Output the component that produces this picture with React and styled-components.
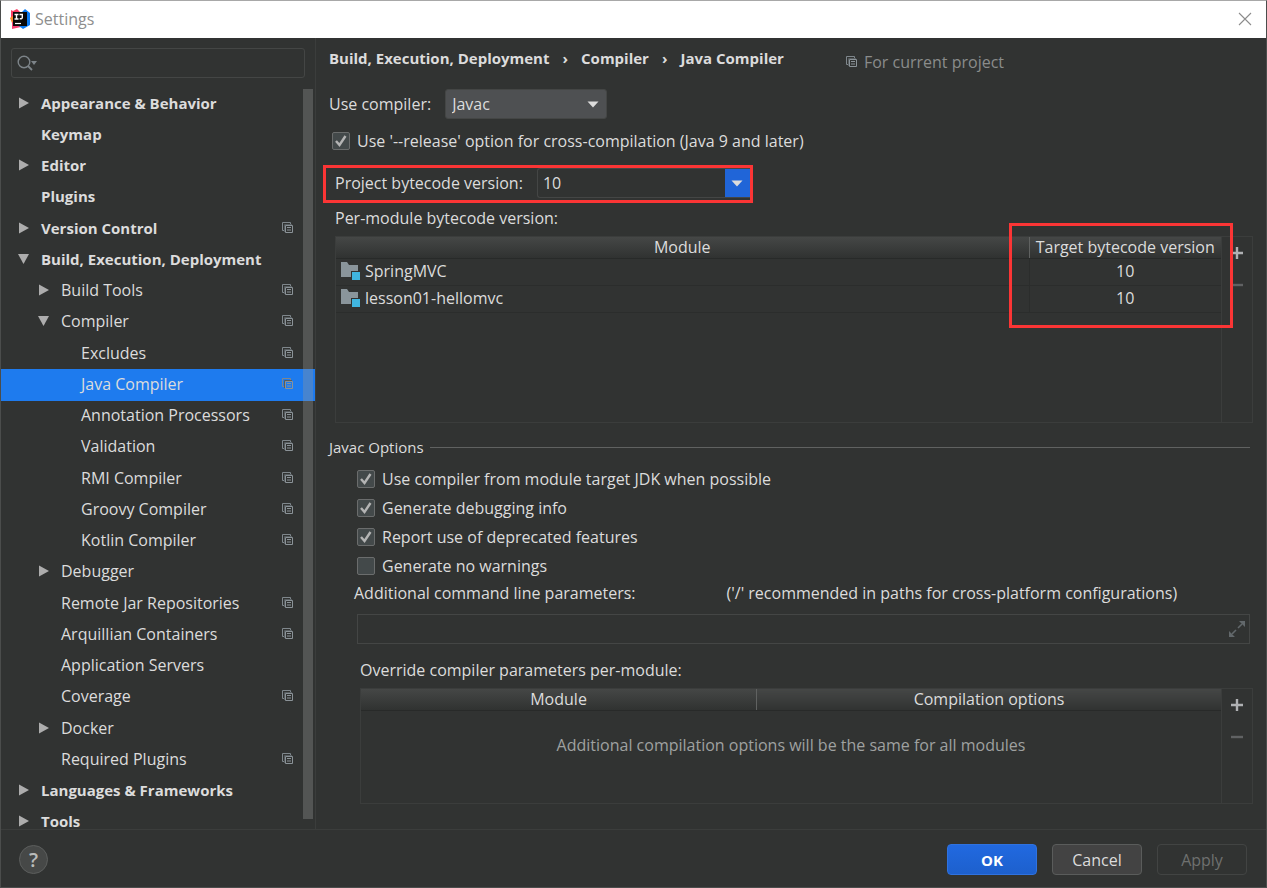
import { useState } from "react";
import styled, { createGlobalStyle, css } from "styled-components";

const TREE = [
  { label: "Appearance & Behavior", level: 0, arrow: "closed" },
  { label: "Keymap", level: 0 },
  { label: "Editor", level: 0, arrow: "closed" },
  { label: "Plugins", level: 0 },
  { label: "Version Control", level: 0, arrow: "closed", project: true },
  { label: "Build, Execution, Deployment", level: 0, arrow: "open" },
  { label: "Build Tools", level: 1, arrow: "closed", project: true },
  { label: "Compiler", level: 1, arrow: "open", project: true },
  { label: "Excludes", level: 2, project: true },
  { label: "Java Compiler", level: 2, project: true },
  { label: "Annotation Processors", level: 2, project: true },
  { label: "Validation", level: 2, project: true },
  { label: "RMI Compiler", level: 2, project: true },
  { label: "Groovy Compiler", level: 2, project: true },
  { label: "Kotlin Compiler", level: 2, project: true },
  { label: "Debugger", level: 1, arrow: "closed" },
  { label: "Remote Jar Repositories", level: 1, project: true },
  { label: "Arquillian Containers", level: 1, project: true },
  { label: "Application Servers", level: 1 },
  { label: "Coverage", level: 1, project: true },
  { label: "Docker", level: 1, arrow: "closed" },
  { label: "Required Plugins", level: 1, project: true },
  { label: "Languages & Frameworks", level: 0, arrow: "closed" },
  { label: "Tools", level: 0, arrow: "closed" },
];

const MODULES = [
  { name: "SpringMVC", target: "10" },
  { name: "lesson01-hellomvc", target: "10" },
];

const OPTIONS = [
  { label: "Use compiler from module target JDK when possible", checked: true },
  { label: "Generate debugging info", checked: true },
  { label: "Report use of deprecated features", checked: true },
  { label: "Generate no warnings", checked: false },
];

/****** Icons ***********/
function AppIcon() {
  return (
    <svg width="20" height="20" viewBox="0 0 20 20" aria-hidden="true">
      <path d="M1 1 L3 2 L7 0 L11 4 L10 10 L1 9 Z" fill="#fb3b63" />
      <path d="M0 9 L4 6 L6 15 L2 14 Z" fill="#fc8a2a" />
      <path d="M2 13 L8 13 L11 18 L2 20 Z" fill="#f43f72" />
      <path d="M12 3 L15 0 L20 4 L20 16 L13 20 L9 17 Z" fill="#0b7cf5" />
      <rect x="3" y="3" width="14" height="14" fill="#0a0a0a" />
      <path
        d="M4.5 5.5 h4 M6.5 5.5 v4.5 M4.5 10 h4 M9.5 5.5 h3.5 M12.3 5.5 v3 q0 1.5 -2.6 1.3"
        fill="none"
        stroke="#fff"
        strokeWidth="1.4"
      />
      <path d="M5 14.5 h6" stroke="#fff" strokeWidth="1.2" />
    </svg>
  );
}

function CloseIcon() {
  return (
    <svg width="14" height="14" viewBox="0 0 14 14" aria-hidden="true">
      <path d="M1 1 L13 13 M13 1 L1 13" stroke="#8c8c8c" strokeWidth="1.1" />
    </svg>
  );
}

function SearchIcon() {
  return (
    <svg width="21" height="16" viewBox="0 0 21 16" aria-hidden="true">
      <circle cx="7" cy="7" r="5.8" fill="none" stroke="#7d8489" strokeWidth="1.4" />
      <path d="M11 11 L15 15" stroke="#7d8489" strokeWidth="1.8" />
      <path d="M14 6 h6 l-3 4 z" fill="#7d8489" />
    </svg>
  );
}

function ArrowIcon({ open }) {
  return (
    <svg width="12" height="12" viewBox="0 0 12 12" aria-hidden="true">
      <path d={open ? "M0 1 H11 L5.5 11 Z" : "M1 0.5 L11 6 L1 11.5 Z"} fill="#adadad" />
    </svg>
  );
}

function ProjectIcon() {
  return (
    <svg width="12" height="12" viewBox="0 0 12 12" aria-hidden="true">
      <path d="M2.5 8.5 H0.5 V0.5 H8.5 V2.5" fill="none" stroke="#7f878c" />
      <path d="M2.5 10 V2.5 H10" fill="none" stroke="#565c5f" />
      <path d="M3.5 3.5 H10.5 V10.5 H3.5 Z" fill="none" stroke="#8b9398" />
      <path d="M5 5.5 H9 M5 8 H9" stroke="#8b9398" />
    </svg>
  );
}

function DownIcon() {
  return (
    <svg width="12" height="7" viewBox="0 0 12 7" aria-hidden="true">
      <path d="M0.5 0.5 H11.5 L6 6.5 Z" fill="#dcdcdc" />
    </svg>
  );
}

function ModuleIcon() {
  return (
    <svg width="20" height="18" viewBox="0 0 20 18" aria-hidden="true">
      <path d="M1 0 H7 L9 3 H18 V9 H11 V15 H1 Z" fill="#8a959b" />
      <rect x="12" y="10" width="8" height="8" fill="#40b6e0" />
    </svg>
  );
}

function PlusIcon() {
  return (
    <svg width="14" height="14" viewBox="0 0 14 14" aria-hidden="true">
      <path d="M7 1 V13 M1 7 H13" stroke="#afb1b3" strokeWidth="2.4" />
    </svg>
  );
}

function MinusIcon() {
  return (
    <svg width="14" height="14" viewBox="0 0 14 14" aria-hidden="true">
      <path d="M1 7 H13" stroke="#606263" strokeWidth="2.4" />
    </svg>
  );
}

function ExpandIcon() {
  return (
    <svg width="16" height="16" viewBox="0 0 16 16" aria-hidden="true">
      <path d="M10 0 H16 V6 Z M0 10 V16 H6 Z" fill="#62686b" />
      <path d="M9 7 L13 3 M7 9 L3 13" stroke="#62686b" strokeWidth="1.6" />
    </svg>
  );
}

/****** Small parts ***********/
function Check({ label, defaultChecked }) {
  const [checked, setChecked] = useState(defaultChecked);

  return (
    <CheckLabel>
      <CheckMark>
        <input type="checkbox" checked={checked} onChange={() => setChecked(!checked)} />
        {checked && (
          <svg width="18" height="18" viewBox="0 0 18 18" aria-hidden="true">
            <path d="M4 9 L7.5 13 L13.5 4" fill="none" stroke="#b4b4b4" strokeWidth="2.4" />
          </svg>
        )}
      </CheckMark>
      {label}
    </CheckLabel>
  );
}

function TableTools() {
  return (
    <Tools>
      <ToolButton aria-label="Add">
        <PlusIcon />
      </ToolButton>
      <ToolButton aria-label="Remove" disabled>
        <MinusIcon />
      </ToolButton>
    </Tools>
  );
}

function Sidebar() {
  const [selected, setSelected] = useState("Java Compiler");

  return (
    <SidebarStyled>
      <SearchBox>
        <SearchIcon />
        <input type="text" aria-label="Search settings" />
      </SearchBox>
      <TreeArea>
        <Tree>
          {TREE.map((item) => (
            <li key={item.label}>
              <TreeRow
                $level={item.level}
                $selected={item.label === selected}
                onClick={() => setSelected(item.label)}
              >
                <ArrowSlot>{item.arrow && <ArrowIcon open={item.arrow === "open"} />}</ArrowSlot>
                <TreeText>{item.label}</TreeText>
                {item.project && <ProjectIcon />}
              </TreeRow>
            </li>
          ))}
        </Tree>
        <ScrollThumb />
      </TreeArea>
    </SidebarStyled>
  );
}

export default function App() {
  return (
    <>
      <GlobalStyle />
      <Window>
        <TitleBar>
          <AppIcon />
          <h1>Settings</h1>
          <CloseButton aria-label="Close">
            <CloseIcon />
          </CloseButton>
        </TitleBar>

        <Body>
          <Sidebar />

          <Content>
            <Header>
              <Crumbs>
                <span>Build, Execution, Deployment</span>
                <i>›</i>
                <span>Compiler</span>
                <i>›</i>
                <span>Java Compiler</span>
              </Crumbs>
              <ProjectHint>
                <ProjectIcon />
                For current project
              </ProjectHint>
            </Header>

            <CompilerRow>
              <label htmlFor="compiler">Use compiler:</label>
              <SelectBox>
                <select id="compiler" defaultValue="Javac">
                  <option>Javac</option>
                  <option>Eclipse</option>
                </select>
                <DownIcon />
              </SelectBox>
            </CompilerRow>

            <ReleaseRow>
              <Check
                label="Use '--release' option for cross-compilation (Java 9 and later)"
                defaultChecked
              />
            </ReleaseRow>

            <VersionRow>
              <label htmlFor="bytecode">Project bytecode version:</label>
              <Combo>
                <input id="bytecode" type="text" defaultValue="10" />
                <button aria-label="Show versions">
                  <DownIcon />
                </button>
              </Combo>
            </VersionRow>

            <ModuleSection>
              <Caption>Per-module bytecode version:</Caption>
              <TablePanel $height={187}>
                <TableArea>
                  <Table>
                    <colgroup>
                      <col />
                      <TargetCol />
                    </colgroup>
                    <thead>
                      <tr>
                        <th>Module</th>
                        <th>Target bytecode version</th>
                      </tr>
                    </thead>
                    <tbody>
                      {MODULES.map((module) => (
                        <tr key={module.name}>
                          <td>
                            <ModuleName>
                              <ModuleIcon />
                              {module.name}
                            </ModuleName>
                          </td>
                          <TargetCell>{module.target}</TargetCell>
                        </tr>
                      ))}
                    </tbody>
                  </Table>
                </TableArea>
                <TableTools />
                <Highlight />
              </TablePanel>
            </ModuleSection>

            <GroupTitle>Javac Options</GroupTitle>

            <OptionList>
              {OPTIONS.map((option) => (
                <Check key={option.label} label={option.label} defaultChecked={option.checked} />
              ))}
            </OptionList>

            <ParamsRow>
              <label htmlFor="params">Additional command line parameters:</label>
              <span>('/' recommended in paths for cross-platform configurations)</span>
            </ParamsRow>
            <ParamsBox>
              <input id="params" type="text" />
              <button aria-label="Expand">
                <ExpandIcon />
              </button>
            </ParamsBox>

            <OverrideSection>
              <Caption>Override compiler parameters per-module:</Caption>
              <TablePanel $height={116}>
                <TableArea>
                  <Table>
                    <colgroup>
                      <ModuleCol />
                      <col />
                    </colgroup>
                    <thead>
                      <tr>
                        <th>Module</th>
                        <th>Compilation options</th>
                      </tr>
                    </thead>
                  </Table>
                  <EmptyText>Additional compilation options will be the same for all modules</EmptyText>
                </TableArea>
                <TableTools />
              </TablePanel>
            </OverrideSection>
          </Content>
        </Body>

        <Footer>
          <HelpButton aria-label="Help">?</HelpButton>
          <Button $primary>OK</Button>
          <Button>Cancel</Button>
          <Button disabled>Apply</Button>
        </Footer>
      </Window>
    </>
  );
}

/****** Styles ***********/
const GlobalStyle = createGlobalStyle`
  * {
    box-sizing: border-box;
  }

  body {
    margin: 0;
    background: #313332;
    color: #dcdcdc;
    font-family: "Open Sans", "Noto Sans", sans-serif;
    font-size: 16px;
    line-height: 24px;
  }

  button,
  input,
  select {
    margin: 0;
    padding: 0;
    border: 0;
    background: none;
    color: inherit;
    font: inherit;
    outline: none;
  }

  svg {
    display: block;
    flex: none;
  }
`;

const Window = styled.div`
  display: flex;
  flex-direction: column;
  min-height: 100vh;
  border: 1px solid #4b4d4c;
  border-top-color: #a8a8a8;
`;

const TitleBar = styled.header`
  display: flex;
  align-items: center;
  height: 37px;
  padding: 0 14px 1px 9px;
  background: #ffffff;

  h1 {
    flex: 1;
    margin: 0 0 0 5px;
    color: #8e8e8e;
    font-size: 16px;
    font-weight: 400;
  }
`;

const CloseButton = styled.button`
  cursor: pointer;
`;

const Body = styled.div`
  display: flex;
  flex: 1;
`;

const SidebarStyled = styled.aside`
  display: flex;
  flex-direction: column;
  flex: none;
  width: 315px;
  border-right: 1px solid #3b3d3c;
`;

const SearchBox = styled.div`
  display: flex;
  align-items: center;
  height: 30px;
  margin: 10px;
  padding-left: 5px;
  border: 1px solid #444645;
  border-radius: 3px;

  input {
    flex: 1;
  }
`;

const TreeArea = styled.div`
  position: relative;
  flex: 1 0 0;
  min-height: 741px;
  overflow: hidden;
`;

const Tree = styled.ul`
  display: grid;
  grid-auto-rows: 1fr;
  height: 750px;
  margin: 0;
  padding: 0;
  list-style: none;
`;

const TreeRow = styled.button`
  display: flex;
  align-items: center;
  width: 100%;
  height: 100%;
  padding: 0 21px 2px ${(props) => 17 + props.$level * 20}px;
  background: ${(props) => (props.$selected ? "#1e7bee" : "transparent")};
  font-size: ${(props) => (props.$level === 0 ? 15 : 16)}px;
  font-weight: ${(props) => (props.$level === 0 ? 700 : 400)};
  text-align: left;
`;

const ArrowSlot = styled.span`
  width: 23px;
`;

const TreeText = styled.span`
  flex: 1;
`;

const ScrollThumb = styled.div`
  position: absolute;
  top: 1px;
  right: 2px;
  bottom: 10px;
  width: 10px;
  background: rgba(150, 150, 150, 0.35);
`;

const Content = styled.main`
  display: flex;
  flex-direction: column;
  flex: 1;
  min-width: 0;
  padding: 9px 13px 0;
`;

const Header = styled.div`
  display: flex;
  gap: 62px;
`;

const Crumbs = styled.nav`
  display: flex;
  gap: 13px;
  font-size: 15px;
  font-weight: 700;
  line-height: 22px;

  i {
    font-style: normal;
  }
`;

const ProjectHint = styled.span`
  display: flex;
  align-items: center;
  gap: 6px;
  color: #8a8c8b;
  line-height: 30px;
`;

const CompilerRow = styled.div`
  display: flex;
  align-items: center;
  gap: 14px;
  margin-top: 12px;
`;

const SelectBox = styled.div`
  display: grid;
  align-items: center;

  select {
    grid-area: 1 / 1;
    width: 162px;
    height: 30px;
    padding: 0 30px 0 6px;
    appearance: none;
    border: 1px solid #444645;
    border-radius: 3px;
    background: #4e5052;
  }

  svg {
    grid-area: 1 / 1;
    justify-self: end;
    margin-right: 8px;
    pointer-events: none;
  }
`;

const CheckLabel = styled.label`
  display: flex;
  align-items: center;
  gap: 7px;
`;

const CheckMark = styled.span`
  display: grid;

  input {
    grid-area: 1 / 1;
    width: 18px;
    height: 18px;
    appearance: none;
    border: 1px solid #6b6d6d;
    border-radius: 2px;
    background: #43494a;
  }

  svg {
    grid-area: 1 / 1;
    pointer-events: none;
  }
`;

const ReleaseRow = styled.div`
  margin-top: 10px;
  padding-left: 3px;
`;

/* Row framed in red */
const VersionRow = styled.div`
  display: flex;
  align-items: center;
  align-self: flex-start;
  gap: 14px;
  height: 38px;
  margin: 12px 0 0 -6px;
  padding: 0 0 2px 9px;
  border: 3px solid #fb3535;
`;

const Combo = styled.div`
  display: flex;
  height: 30px;
  border: 1px solid #444645;
  border-right: 0;
  border-radius: 3px 0 0 3px;

  input {
    width: 187px;
    padding-left: 5px;
  }

  button {
    display: grid;
    place-items: center;
    width: 25px;
    background: #2065d8;
  }
`;

const ModuleSection = styled.section`
  margin-top: 3px;
  padding-left: 6px;
`;

const Caption = styled.p`
  margin: 0 0 6px;
`;

const TablePanel = styled.div`
  position: relative;
  display: flex;
  height: ${(props) => props.$height}px;
  border: 1px solid #3b3d3c;
`;

const TableArea = styled.div`
  flex: 1;
`;

const Table = styled.table`
  width: 100%;
  table-layout: fixed;
  border-collapse: collapse;

  th {
    height: 21px;
    padding: 0;
    border-bottom: 1px solid #282a29;
    background: linear-gradient(#454746, #303231);
    font-weight: 400;
    line-height: 20px;
  }

  th + th {
    border-left: 1px solid #606261;
  }

  td {
    height: 27px;
    padding: 0 0 2px;
    border: solid #2b2d2c;
    border-width: 0 0 1px;
  }

  td + td {
    border-left-width: 1px;
  }
`;

const TargetCol = styled.col`
  width: 192px;
`;

const ModuleCol = styled.col`
  width: 46%;
`;

const ModuleName = styled.span`
  display: flex;
  align-items: center;
  gap: 5px;
  padding-left: 4px;
`;

const TargetCell = styled.td`
  text-align: center;
`;

const EmptyText = styled.p`
  margin: 22px 0 0;
  color: #9fa1a0;
  text-align: center;
`;

const Tools = styled.div`
  display: flex;
  flex-direction: column;
  width: 31px;
  border-left: 1px solid #3b3d3c;
`;

const ToolButton = styled.button`
  display: grid;
  place-items: center;
  height: 32px;
`;

/* Red frame over the target version column */
const Highlight = styled.div`
  position: absolute;
  top: -14px;
  right: 19px;
  width: 224px;
  height: 105px;
  border: 3px solid #fb3535;
  pointer-events: none;
`;

const GroupTitle = styled.h2`
  display: flex;
  align-items: center;
  gap: 6px;
  margin: 12px 3px 5px 0;
  font-size: 15px;
  font-weight: 400;

  &::after {
    content: "";
    flex: 1;
    height: 1px;
    background: #606261;
  }
`;

const OptionList = styled.div`
  display: grid;
  grid-auto-rows: 29px;
  justify-content: start;
  padding-left: 28px;
`;

const ParamsRow = styled.div`
  display: flex;
  gap: 91px;
  margin-top: 1px;
  padding-left: 25px;
`;

const ParamsBox = styled.div`
  display: flex;
  align-items: center;
  height: 30px;
  margin: 9px 3px 0 28px;
  padding-right: 4px;
  border: 1px solid #444645;

  input {
    flex: 1;
    padding-left: 5px;
  }
`;

const OverrideSection = styled.section`
  margin-top: 14px;
  padding-left: 31px;
`;

const Footer = styled.footer`
  display: flex;
  align-items: center;
  gap: 15px;
  height: 58px;
  padding: 2px 19px 0 18px;
  border-top: 1px solid #3b3d3c;
`;

const HelpButton = styled.button`
  width: 29px;
  height: 29px;
  margin-right: auto;
  border: 1px solid #5c5e5d;
  border-radius: 50%;
  background: #464847;
  color: #b9bbba;
  font-size: 20px;
  font-weight: 600;
  line-height: 26px;
`;

const Button = styled.button`
  width: 90px;
  height: 31px;
  border: 1px solid #5a5c5b;
  border-radius: 4px;
  background: #434343;

  &:disabled {
    border-color: #424443;
    background: none;
    color: #6e706f;
  }

  ${(props) =>
    props.$primary &&
    css`
      border-color: #2f72e0;
      background: linear-gradient(#2169e0, #1d60cd);
      color: #ffffff;
      font-size: 15px;
      font-weight: 700;
    `}
`;
